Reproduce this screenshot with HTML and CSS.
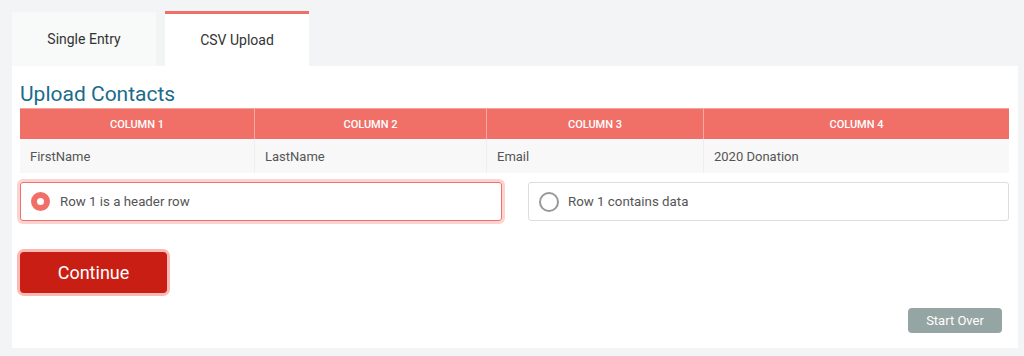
FILE: index.html
```html
<!DOCTYPE html>
<html>
<head>
<meta charset="utf-8">
<link rel="stylesheet" href="styles.css">
</head>
<body>
<div class="page">
  <div class="tabs">
    <div class="tab">Single Entry</div>
    <div class="tab active">CSV Upload</div>
  </div>
  <div class="panel">
    <h2 class="title">Upload Contacts</h2>
    <div class="table">
      <div class="th">COLUMN 1</div>
      <div class="th">COLUMN 2</div>
      <div class="th">COLUMN 3</div>
      <div class="th">COLUMN 4</div>
      <div class="td">FirstName</div>
      <div class="td">LastName</div>
      <div class="td">Email</div>
      <div class="td">2020 Donation</div>
    </div>
    <div class="options">
      <div class="option selected"><span class="radio on"></span><span>Row 1 is a header row</span></div>
      <div class="option"><span class="radio"></span><span>Row 1 contains data</span></div>
    </div>
    <div class="actions">
      <button class="btn-continue">Continue</button>
    </div>
    <div class="footer">
      <button class="btn-start">Start Over</button>
    </div>
  </div>
</div>
</body>
</html>
```

FILE: styles.css
```css
html, body {
  margin: 0;
  padding: 0;
  background: #f3f4f6;
  font-family: Roboto, "Liberation Sans", Arial, sans-serif;
}
.page {
  padding: 12px 6px 8px 12px;
}
.tabs {
  display: flex;
  gap: 9px;
}
.tab {
  width: 144px;
  height: 54px;
  box-sizing: border-box;
  background: #f8f9f9;
  color: #333;
  font-size: 14px;
  display: flex;
  align-items: center;
  justify-content: center;
}
.tab.active {
  background: #fff;
  border-top: 3px solid #f07068;
  margin-top: -1px;
  height: 55px;
}
.panel {
  background: #fff;
  padding: 16px 16px 15px 8px;
}
.title {
  margin: 0 0 2px 0;
  font-size: 21px;
  line-height: 24px;
  font-weight: 400;
  color: #1b6b8a;
}
.table {
  display: grid;
  grid-template-columns: 234px 232px 217px 1fr;
  margin-right: -7px;
}
.th {
  background: #f07068;
  color: #fff;
  font-size: 11px;
  font-weight: 500;
  height: 31px;
  display: flex;
  align-items: center;
  justify-content: center;
  border-left: 1px solid #f6a9a3;
  border-top: 1px solid #f5a29c;
  box-sizing: border-box;
}
.th:first-child {
  border-left: none;
}
.td {
  background: #f8f8f8;
  color: #555;
  font-size: 13px;
  height: 34px;
  display: flex;
  align-items: center;
  padding-left: 10px;
  border-left: 1px solid #eee;
}
.td:nth-child(5) {
  border-left: none;
}
.options {
  display: grid;
  grid-template-columns: 482px 481px;
  gap: 26px;
  margin-top: 9px;
}
.option {
  height: 39px;
  box-sizing: border-box;
  border: 1px solid #ddd;
  border-radius: 3px;
  display: flex;
  align-items: center;
  gap: 9px;
  padding-left: 10px;
  font-size: 13.3px;
  color: #555;
}
.option.selected {
  border-color: #f07068;
  box-shadow: 0 0 0 3px #fcd3d0;
  gap: 10px;
}
.radio {
  width: 20px;
  height: 20px;
  box-sizing: border-box;
  border-radius: 50%;
  border: 2px solid #999;
  background: #fff;
}
.radio.on {
  width: 19px;
  height: 19px;
  border: 6.5px solid #f07068;
  background: #fff;
}
.actions {
  margin-top: 31px;
}
.btn-continue {
  width: 147px;
  height: 41px;
  border: none;
  border-radius: 4px;
  background: #c81e14;
  color: #fff;
  font-family: inherit;
  font-size: 18px;
  box-shadow: 0 0 0 3px #fcb8b4;
  padding: 0;
}
.footer {
  display: flex;
  justify-content: flex-end;
  margin-top: 15px;
}
.btn-start {
  width: 94px;
  height: 25px;
  border: none;
  border-radius: 4px;
  background: #95a5a3;
  color: #fff;
  font-family: inherit;
  font-size: 13px;
  padding: 0;
}
```
